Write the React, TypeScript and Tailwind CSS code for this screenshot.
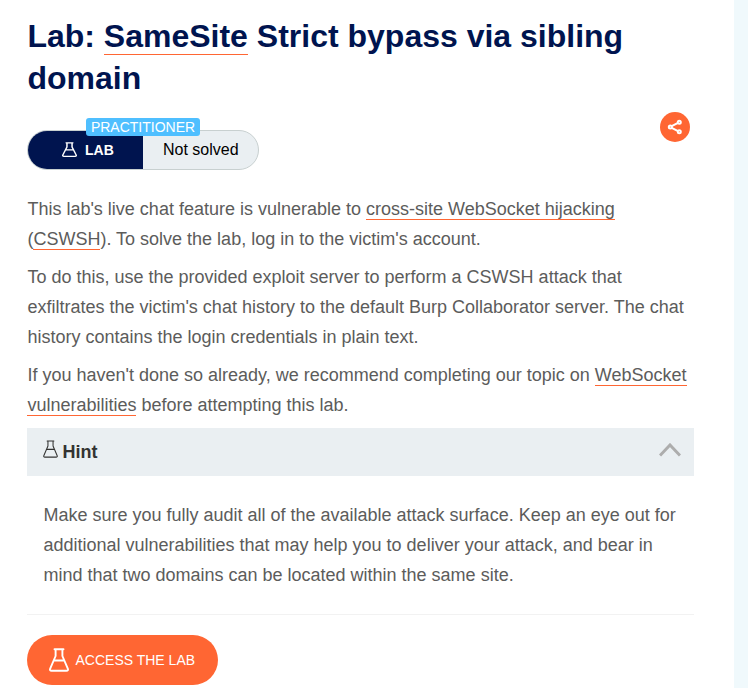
import React from "react";

function Flask({ className, stroke = 1.5 }: { className: string; stroke?: number }) {
  return (
    <svg viewBox="0 0 20 24" className={className} fill="none" stroke="currentColor" strokeWidth={stroke} strokeLinejoin="round" strokeLinecap="round" preserveAspectRatio="none">
      <path d="M5.500 1.200h9M6.600 1.500v6.500L1.200 20.600c-.6 1.400 0 2.200 1.300 2.200h15c1.300 0 1.900-.8 1.300-2.200L13.400 8V1.500M4.800 12.500h10.400" />
    </svg>
  );
}

function Link({ children }: { children: React.ReactNode }) {
  return <a className="border-b border-[#ff6633]">{children}</a>;
}

export default function App() {
  return (
    <div className="flex h-[688px] w-[748px] overflow-hidden bg-white font-['Liberation_Sans',Arial,sans-serif]">
      <main className="w-[734px] shrink-0 pt-[15px] pr-10 pl-[27px]">
        <h1 className="pl-[0.4px] text-[32px] leading-[42px] font-bold whitespace-nowrap text-[#00144f]">
          Lab: <Link>SameSite</Link> Strict bypass via sibling
          <br />
          domain
        </h1>

        <div className="mt-[13px] flex h-[58px] items-start justify-between">
          <div className="relative mt-[18px] flex h-10 w-[232px] overflow-visible rounded-full border border-[#c8d0d0] bg-[#eaeff2]">
            <div className="flex w-[115px] items-center rounded-l-full bg-[#00144f] pl-[34px] text-white">
              <Flask className="-mt-0.5 h-[15px] w-[15px]" stroke={2} />
              <span className="ml-2 text-sm font-bold">LAB</span>
            </div>
            <span className="pt-[7px] pl-5 text-base leading-6 whitespace-nowrap text-black">Not solved</span>
            <span className="absolute -top-[13px] left-[58px] h-[18px] w-[114px] rounded-[3px] bg-[#4fbfff] text-center text-sm leading-[18px] whitespace-nowrap text-white">PRACTITIONER</span>
          </div>
          <button className="mr-1 flex h-[30px] w-[30px] items-center justify-center rounded-full bg-[#ff6633] text-white">
            <svg viewBox="0 0 16 16" className="h-4 w-4" fill="none" stroke="currentColor" strokeWidth="2">
              <path d="M11 3.900 4.700 7.200M4.700 8.800 11 12.100" />
              <circle cx="12.300" cy="3.200" r="1.500" />
              <circle cx="3.300" cy="8" r="1.500" />
              <circle cx="12.300" cy="12.800" r="1.500" />
            </svg>
          </button>
        </div>

        <div className="mt-6 flex flex-col gap-2 pl-[0.4px] text-lg leading-[30px] whitespace-nowrap text-[#5c5c5b]">
          <p>
            This lab's live chat feature is vulnerable to <Link>cross-site WebSocket hijacking</Link>
            <br />(<Link>CSWSH</Link>). To solve the lab, log in to the victim's account.
          </p>
          <p>
            To do this, use the provided exploit server to perform a CSWSH attack that
            <br />exfiltrates the victim's chat history to the default Burp Collaborator server. The chat
            <br />history contains the login credentials in plain text.
          </p>
          <p>
            If you haven't done so already, we recommend completing our topic on <Link>WebSocket</Link>
            <br /><Link>vulnerabilities</Link> before attempting this lab.
          </p>
        </div>

        <section className="mt-2 border-b border-[#f2f2f2]">
          <div className="flex h-12 items-center bg-[#eaeff2] pr-[13px] pl-4 text-[#333332]">
            <Flask className="-mt-1.5 h-[18px] w-[15px]" stroke={1.4} />
            <span className="ml-[4.4px] text-lg font-bold">Hint</span>
            <svg viewBox="0 0 22 14" className="-mt-1 ml-auto h-3.5 w-[22px]" fill="none" stroke="#adadad" strokeWidth="3">
              <path d="M1 12.500 11 2l10 10.500" />
            </svg>
          </div>
          <p className="h-[138px] pt-6 pr-4 pl-[16.4px] text-lg leading-[30px] whitespace-nowrap text-[#5c5c5b]">
            Make sure you fully audit all of the available attack surface. Keep an eye out for
            <br />additional vulnerabilities that may help you to deliver your attack, and bear in
            <br />mind that two domains can be located within the same site.
          </p>
        </section>

        <button className="mt-5 flex h-[50px] w-[191px] items-center rounded-full bg-[#ff6633] pl-[22px] text-white">
          <Flask className="h-6 w-5" stroke={1.9} />
          <span className="ml-[6.500px] text-sm whitespace-nowrap">ACCESS THE LAB</span>
        </button>
      </main>
      <aside className="grow bg-[#f0f9fc]" />
    </div>
  );
}
